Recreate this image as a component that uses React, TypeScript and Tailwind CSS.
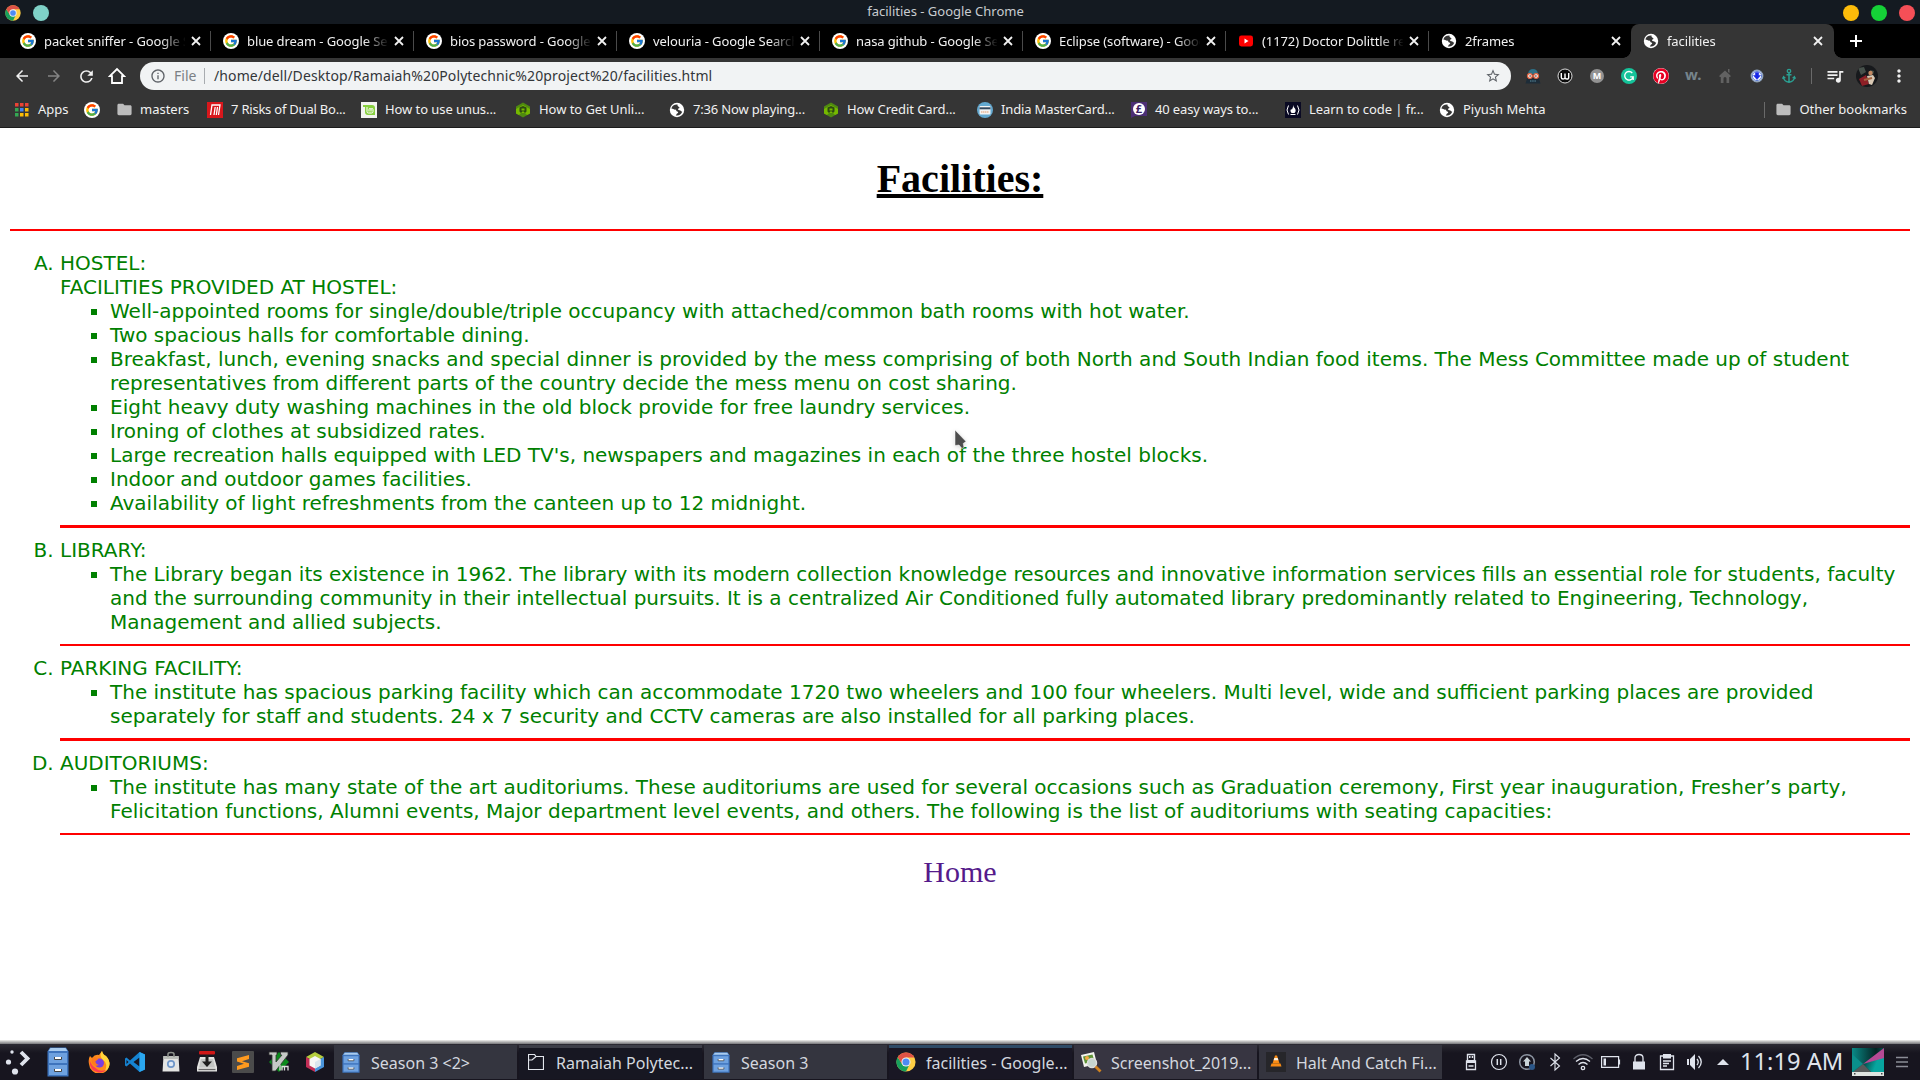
import type { ReactNode } from "react";
import { FcGoogle } from "react-icons/fc";
import { FaPinterest } from "react-icons/fa";
import {
  MdArrowBack,
  MdArrowForward,
  MdRefresh,
  MdStarBorder,
  MdInfoOutline,
  MdMoreVert,
  MdFolder,
  MdQueueMusic,
} from "react-icons/md";

function ChromeLogo({ className }: { className: string }) {
  return (
    <svg viewBox="0 0 48 48" className={className}>
      <circle cx="24" cy="24" r="23" fill="#ffce44" />
      <path d="M4 12.5 A23 23 0 0 0 24 47 L33 29 L15 29 Z" fill="#17a05d" />
      <path d="M24 13h20.2A23 23 0 0 0 4 12.5L14.5 29z" fill="#de5246" />
      <circle cx="24" cy="24" r="11" fill="#f1f1f1" />
      <circle cx="24" cy="24" r="8.5" fill="#4c8bf5" />
    </svg>
  );
}

function GoogleIcon() {
  return (
    <span className="flex size-4 shrink-0 items-center justify-center rounded-full bg-white">
      <FcGoogle className="size-[14px]" />
    </span>
  );
}

function Globe() {
  return (
    <svg viewBox="0 0 16 16" className="size-4 shrink-0">
      <circle cx="8" cy="8" r="7.2" fill="#fff" />
      <path
        d="M8.6 2.6 C5.5 2.3 3 3.9 2.4 6.6 C4 6.9 5 7.8 6.5 7.6 C7.4 8.2 7 9.3 8.4 9.6 C9.8 9.9 9.2 11.4 8 11.6 L6.8 13.4 C9.6 14 12.4 12.5 13.2 9.8 C12.2 9.8 11.9 8.2 10.4 8.2 C9.2 8.2 8.4 7.2 9.4 6.5 C10.6 6.3 11 5.2 9.6 4.8 C8.8 4.5 8.2 3.6 8.6 2.6Z"
        fill="#353535"
      />
    </svg>
  );
}

function YouTube() {
  return (
    <svg viewBox="0 0 16 16" className="size-4 shrink-0">
      <rect x="1" y="2.5" width="14" height="11" rx="2.4" fill="#f00" />
      <path d="M6.5 5.5v5l4-2.5z" fill="#fff" />
    </svg>
  );
}

function Close() {
  return (
    <svg viewBox="0 0 10 10" className="size-2.5 shrink-0">
      <path d="M1 1l8 8M9 1l-8 8" stroke="#f1f1f1" strokeWidth="1.8" />
    </svg>
  );
}

const tabs: { title: string; icon: ReactNode; look: string }[] = [
  { title: "packet sniffer - Google Search", icon: <GoogleIcon />, look: "w-[203px] pr-2.5" },
  { title: "blue dream - Google Search", icon: <GoogleIcon />, look: "w-[203px] pr-2.5" },
  { title: "bios password - Google Search", icon: <GoogleIcon />, look: "w-[203px] pr-2.5" },
  { title: "velouria - Google Search", icon: <GoogleIcon />, look: "w-[203px] pr-2.5" },
  { title: "nasa github - Google Search", icon: <GoogleIcon />, look: "w-[203px] pr-2.5" },
  { title: "Eclipse (software) - Google Search", icon: <GoogleIcon />, look: "w-[203px] pr-2.5" },
  { title: "(1172) Doctor Dolittle reads", icon: <YouTube />, look: "w-[203px] pr-2.5" },
  { title: "2frames", icon: <Globe />, look: "w-[202px] pr-2.5" },
  {
    title: "facilities",
    icon: <Globe />,
    look: "w-[203px] rounded-t-lg bg-[#353535] pr-[11px]",
  },
];

function TitleBar() {
  return (
    <div className="flex h-6 bg-[#141a21] text-[13px] text-[#c8ccd0]">
      <div className="flex w-[600px] gap-3 pt-[5px] pl-[5px]">
        <ChromeLogo className="size-4" />
        <span className="size-4 rounded-full bg-[#7fd1c7]" />
      </div>
      <div className="w-[691px] text-center leading-[23px]">facilities - Google Chrome</div>
      <div className="ml-auto flex gap-3 pt-[5px] pr-[5px]">
        <span className="size-4 rounded-full bg-[#fdbc0a]" />
        <span className="size-4 rounded-full bg-[#15d137]" />
        <span className="size-4 rounded-full bg-[#f54f57]" />
      </div>
    </div>
  );
}

function TabStrip() {
  return (
    <div className="flex h-[34px] bg-black pl-2 text-[13px] text-[#f1f1f1]">
      {tabs.map((tab, i) => (
        <div key={tab.title} className={`relative flex items-center pl-3 ${tab.look}`}>
          {tab.icon}
          <span className="ml-2 h-[18px] w-[141px] overflow-hidden leading-[18px] tracking-[-0.1px] whitespace-nowrap [mask-image:linear-gradient(to_right,black_117px,transparent_142px)]">
            {tab.title}
          </span>
          <span className="ml-auto flex">
            <Close />
          </span>
          {i < tabs.length - 2 && (
            <span className="absolute top-[7px] right-0 h-5 w-px bg-[#4a4a4a]" />
          )}
          {i === tabs.length - 1 && (
            <>
              <span className="absolute bottom-0 -left-2 size-2 bg-[radial-gradient(circle_at_0_0,black_7.5px,#353535_8px)]" />
              <span className="absolute -right-2 bottom-0 size-2 bg-[radial-gradient(circle_at_100%_0,black_7.5px,#353535_8px)]" />
            </>
          )}
        </div>
      ))}
      <svg viewBox="0 0 12 12" className="mt-[11px] ml-4 size-3">
        <path d="M6 0v12M0 6h12" stroke="#fff" strokeWidth="2" />
      </svg>
    </div>
  );
}

function Extensions() {
  return (
    <div className="flex h-full items-center gap-4">
      <svg viewBox="0 0 16 16" className="size-4">
        <path d="M3 7Q3 1 8 1t5 6l2.500 8.500H.5z" fill="#1d2c38" />
        <path d="M3 6Q3.500 1 8 1t5 5z" fill="#2f7186" />
        <circle cx="4.900" cy="8" r="2.400" fill="#fff" stroke="#e0623f" strokeWidth="1.300" />
        <circle cx="11.100" cy="8" r="2.400" fill="#fff" stroke="#e0623f" strokeWidth="1.300" />
        <circle cx="5.100" cy="8" r=".8" fill="#222" />
        <circle cx="10.900" cy="8" r=".8" fill="#222" />
        <path d="M5 13h6" stroke="#5b8fa3" strokeDasharray="1.500 .7" />
      </svg>
      <svg viewBox="0 0 16 16" className="size-4">
        <circle cx="8" cy="8" r="7" fill="#0c0c0c" stroke="#ddd" strokeWidth="1" />
        <path
          d="M4.300 5v4.500q0 1.500 1.800 1.500T8 9.500V5.500v4q0 1.500 1.900 1.500t1.800-1.500V5"
          fill="none"
          stroke="#fff"
          strokeWidth="1.400"
        />
      </svg>
      <span className="flex size-4 items-center justify-center">
        <span className="flex size-[14px] items-center justify-center rounded-full bg-[#929292] text-[9px] font-bold text-white">
          M
        </span>
      </span>
      <svg viewBox="0 0 16 16" className="size-4">
        <circle cx="8" cy="8" r="8" fill="#15c39a" />
        <path
          d="M11.300 5A4.300 4.300 0 1 0 12.200 8.800H9.200M12.200 8.800V12"
          fill="none"
          stroke="#fff"
          strokeWidth="1.300"
        />
      </svg>
      <span className="flex size-4 rounded-full bg-white">
        <FaPinterest className="size-4 text-[#e60023]" />
      </span>
      <span className="-mt-1 w-4 text-[15px] leading-4 font-bold text-[#75848c]">w.</span>
      <svg viewBox="0 0 16 16" className="size-4">
        <path d="M2.500 7.500L8 2.500l5.500 5V9h-1.300v6H9.500v-4.500q0-1.500-1.500-1.500t-1.500 1.500V15H3.800V9H2.500z" fill="#626262" />
        <path d="M11 1h1.500v4L11 4z" fill="#626262" />
      </svg>
      <svg viewBox="0 0 16 16" className="size-4">
        <circle cx="8" cy="8" r="5.800" fill="#e8edf6" stroke="#8fa3bd" strokeWidth="1.200" />
        <circle cx="8" cy="8" r="4.600" fill="#fff" stroke="#3d63c9" strokeWidth=".8" />
        <path d="M6.300 4.500h3.400v3h1.800L8 11.500 4.500 7.500h1.800z" fill="#1727e6" stroke="#1727e6" strokeWidth=".5" />
      </svg>
      <svg viewBox="0 0 16 16" className="size-4">
        <circle cx="8" cy="3" r="1.700" fill="none" stroke="#2ba093" strokeWidth="1.300" />
        <path
          d="M8 4.500V14M5.500 6.800h5M2.300 9Q3 13.500 8 14.300 13 13.500 13.700 9"
          fill="none"
          stroke="#2ba093"
          strokeWidth="1.500"
        />
        <path d="M1 11l1.300-3.500L5 10zM15 11l-1.300-3.500L11 10z" fill="#2ba093" />
      </svg>
    </div>
  );
}

function Toolbar() {
  return (
    <div className="flex h-9 items-center bg-[#353535] text-[#f1f1f1]">
      <div className="ml-[13px] flex w-[127px] items-center gap-[14px]">
        <MdArrowBack className="size-[18px]" />
        <MdArrowForward className="size-[18px] text-[#848484]" />
        <MdRefresh className="size-[19px]" />
        <svg viewBox="0 0 18 18" className="-ml-0.5 size-[18px]">
          <path
            d="M1.800 9.200L9 2l7.200 7.200H14V16H4V9.200z"
            fill="none"
            stroke="#fff"
            strokeWidth="1.800"
          />
        </svg>
      </div>
      <div className="flex h-7 w-[1371px] items-center rounded-full bg-[#f1f3f4] pr-2.5 pl-2.5 text-[14px] leading-5 text-[#333639]">
        <MdInfoOutline className="size-4 text-[#5f6368]" />
        <span className="-mt-px ml-2 w-[22px] text-[#7b8085]">File</span>
        <span className="mr-[9px] ml-2 h-4 w-px bg-[#a8acb0]" />
        <span className="-mt-px tracking-[0.1px]">
          /home/dell/Desktop/Ramaiah%20Polytechnic%20project%20/facilities.html
        </span>
        <MdStarBorder className="ml-auto size-4 text-[#5f6368]" />
      </div>
      <div className="ml-[14px]">
        <Extensions />
      </div>
      <span className="ml-[14px] h-4 w-px bg-[#6a6a6a]" />
      <MdQueueMusic className="ml-[13px] size-5" />
      <svg viewBox="0 0 22 22" className="ml-[11px] size-[22px] rounded-full">
        <rect width="22" height="22" fill="#17191c" />
        <path d="M2 3l6-1 2 5-5 3zM14 5l4 1-1 4z" fill="#46504a" />
        <path d="M3 14l7-4 3 9-7 2z" fill="#8d1f26" />
        <circle cx="14.500" cy="8" r="2.200" fill="#c48a63" />
        <path d="M11 11l6-1 2 3-3 7-3-1z" fill="#d8c8b4" />
        <path d="M8 15l8-2" stroke="#a3623e" strokeWidth="2" />
      </svg>
      <MdMoreVert className="ml-[11px] size-5" />
    </div>
  );
}

function AppsIcon() {
  const colors = [
    "#ea4335", "#ea4335", "#ea4335",
    "#34a853", "#4285f4", "#fbbc05",
    "#34a853", "#fbbc05", "#fbbc05",
  ];
  return (
    <svg viewBox="0 0 14 14" className="size-[14px]">
      {colors.map((c, i) => (
        <rect key={i} x={(i % 3) * 5} y={Math.floor(i / 3) * 5} width="3.500" height="3.500" fill={c} />
      ))}
    </svg>
  );
}

function HexIcon() {
  return (
    <svg viewBox="0 0 16 16" className="size-4">
      <path d="M8 .5l7 4v7l-7 4-7-4v-7z" fill="#4f8a10" />
      <path d="M8 3L1 7v4.500l3 1.500 2-2h4l2 2 3-1.500V7z" fill="#76b900" />
      <path d="M4.500 5.500L8 4l3.500 1.500v4L10 11 8 9l-2 2-1.500-1.500z" fill="#2c4a12" />
      <path d="M6.500 6.500h3v2h-3z" fill="#76b900" />
    </svg>
  );
}

const bookmarks: { label: string; icon: ReactNode; tracking?: string }[] = [
  {
    label: "7 Risks of Dual Bo...",
    tracking: "tracking-[-0.22px]",
    icon: (
      <svg viewBox="0 0 16 16" className="size-4">
        <rect width="16" height="16" fill="#d9171c" />
        <path
          d="M3.500 13L5 3h8l-1.500 10M7 13l1.200-8M9.300 13l1.200-8"
          fill="none"
          stroke="#fff"
          strokeWidth="1.300"
        />
      </svg>
    ),
  },
  {
    label: "How to use unus...",
    tracking: "tracking-[-0.07px]",
    icon: (
      <svg viewBox="0 0 16 16" className="size-4">
        <rect width="16" height="16" fill="#f3f3f0" />
        <path d="M2 3h9q3 0 3 3v7H7q-3 0-3-3V5H2z" fill="#87cf3e" />
        <path
          d="M6 5v4.500q0 1.500 1.500 1.500h3q1.500 0 1.500-1.500V7.500q0-1-1-1t-1 1V9.500M8 9.500v-2q0-1 1-1t1 1"
          fill="none"
          stroke="#fff"
        />
      </svg>
    ),
  },
  { label: "How to Get Unli...", icon: <HexIcon />, tracking: "tracking-[-0.05px]" },
  { label: "7:36 Now playing...", icon: <Globe />, tracking: "tracking-[-0.18px]" },
  { label: "How Credit Card...", icon: <HexIcon />, tracking: "tracking-[-0.07px]" },
  {
    label: "India MasterCard...",
    tracking: "tracking-[-0.14px]",
    icon: (
      <svg viewBox="0 0 16 16" className="size-4">
        <circle cx="8" cy="8" r="8" fill="#64a9d0" />
        <rect x="2.500" y="4" width="11" height="8.500" rx="1" fill="#f4f4f4" />
        <rect x="2.500" y="5.300" width="11" height="2" fill="#34495e" />
        <path d="M4 10h8" stroke="#e9b99a" strokeWidth="1.500" strokeDasharray="1.500 .5" />
      </svg>
    ),
  },
  {
    label: "40 easy ways to...",
    tracking: "tracking-[-0.14px]",
    icon: (
      <svg viewBox="0 0 16 16" className="size-4">
        <path d="M0 0h16v14H4l-4 2z" fill="#4c2f75" />
        <circle cx="8" cy="7" r="6" fill="#fff" />
        <text x="8" y="11" textAnchor="middle" fontSize="11" fontWeight="700" fill="#3c2163">
          £
        </text>
      </svg>
    ),
  },
  {
    label: "Learn to code | fr...",
    tracking: "tracking-[-0.05px]",
    icon: (
      <svg viewBox="0 0 16 16" className="size-4">
        <rect width="16" height="16" fill="#0a0a23" />
        <path d="M3.500 3.500Q.5 8 3.500 12.500M12.500 3.500q3 4.500 0 9" fill="none" stroke="#fff" />
        <path d="M8 3q.5 2 2 3.500 1.500 2.500-.5 4.500H6.500Q4.500 9 6 7q.8.800 1 .5Q8.500 5.500 8 3z" fill="#fff" />
        <path d="M5.500 12.500h5" stroke="#fff" />
      </svg>
    ),
  },
  { label: "Piyush Mehta", icon: <Globe /> },
];

function BookmarksBar() {
  return (
    <div className="flex h-[34px] items-center border-b border-[#1c1c1c] bg-[#353535] pb-0.5 text-[13px] text-[#f1f1f1]">
      <div className="ml-[15px] flex w-[69px] items-center gap-[9px]">
        <AppsIcon />
        Apps
      </div>
      <GoogleIcon />
      <div className="ml-4 flex w-[91px] items-center gap-[7px]">
        <MdFolder className="size-[17px] text-[#bdbdbd]" />
        masters
      </div>
      {bookmarks.map((b) => (
        <div key={b.label} className="flex w-[154px] items-center gap-2 whitespace-nowrap">
          {b.icon}
          <span className={b.tracking}>{b.label}</span>
        </div>
      ))}
      <div className="mr-[13px] ml-auto flex items-center">
        <span className="mr-2.5 h-4 w-px bg-[#6a6a6a]" />
        <MdFolder className="mr-[7px] size-[17px] text-[#bdbdbd]" />
        Other bookmarks
      </div>
    </div>
  );
}

const facilities: { title: string; subtitle?: string; items: string[] }[] = [
  {
    title: "HOSTEL:",
    subtitle: "FACILITIES PROVIDED AT HOSTEL:",
    items: [
      "Well-appointed rooms for single/double/triple occupancy with attached/common bath rooms with hot water.",
      "Two spacious halls for comfortable dining.",
      "Breakfast, lunch, evening snacks and special dinner is provided by the mess comprising of both North and South Indian food items. The Mess Committee made up of student representatives from different parts of the country decide the mess menu on cost sharing.",
      "Eight heavy duty washing machines in the old block provide for free laundry services.",
      "Ironing of clothes at subsidized rates.",
      "Large recreation halls equipped with LED TV's, newspapers and magazines in each of the three hostel blocks.",
      "Indoor and outdoor games facilities.",
      "Availability of light refreshments from the canteen up to 12 midnight.",
    ],
  },
  {
    title: "LIBRARY:",
    items: [
      "The Library began its existence in 1962. The library with its modern collection knowledge resources and innovative information services fills an essential role for students, faculty and the surrounding community in their intellectual pursuits. It is a centralized Air Conditioned fully automated library predominantly related to Engineering, Technology, Management and allied subjects.",
    ],
  },
  {
    title: "PARKING FACILITY:",
    items: [
      "The institute has spacious parking facility which can accommodate 1720 two wheelers and 100 four wheelers. Multi level, wide and sufficient parking places are provided separately for staff and students. 24 x 7 security and CCTV cameras are also installed for all parking places.",
    ],
  },
  {
    title: "AUDITORIUMS:",
    items: [
      "The institute has many state of the art auditoriums. These auditoriums are used for several occasions such as Graduation ceremony, First year inauguration, Fresher’s party, Felicitation functions, Alumni events, Major department level events, and others. The following is the list of auditoriums with seating capacities:",
    ],
  },
];

function Page() {
  return (
    <main className="h-[912px] bg-white px-2.5 pt-7 font-['Liberation_Serif',serif]">
      <h1 className="text-center text-[40px] leading-[46px] font-bold text-black underline">
        Facilities:
      </h1>
      <hr className="mt-[26.5px] h-[2.5px] border-0 bg-[#ff0000]" />
      <ol className="mt-5 list-[upper-alpha] pl-[50px] font-['DejaVu_Sans',sans-serif] text-[20px] leading-6 text-[#008000]">
        {facilities.map((f) => (
          <li key={f.title}>
            {f.title}
            {f.subtitle && <div>{f.subtitle}</div>}
            <ul className="list-[square] pl-[50px]">
              {f.items.map((item) => (
                <li key={item}>{item}</li>
              ))}
            </ul>
            <hr className="my-2.5 h-[2.5px] border-0 bg-[#ff0000]" />
          </li>
        ))}
      </ol>
      <div className="mt-5 text-center text-[30px] leading-[34px]">
        <a href="#home" className="text-[#551a8b]">
          Home
        </a>
      </div>
    </main>
  );
}

function Cursor() {
  return (
    <svg
      viewBox="0 0 14 22"
      className="absolute top-[429px] left-[954px] h-[22px] w-[14px] drop-shadow-sm"
    >
      <path
        d="M1 1v15.500l4-.5 3 3.500 2-1-.8-4L12 12.500z"
        fill="#4d4d4d"
        stroke="#fff"
        strokeWidth=".5"
      />
    </svg>
  );
}

function Cabinet({ className }: { className: string }) {
  return (
    <svg viewBox="0 0 22 30" preserveAspectRatio="none" className={className}>
      <path d="M3 .5h16l2.500 4V29.500H.5V4.500z" fill="#3e74bd" />
      <path d="M3.500 1h15l2 3h-19z" fill="#a9cbee" />
      <rect x="2" y="6" width="18" height="10" fill="#6ea1df" />
      <rect x="2" y="18" width="18" height="10" fill="#6ea1df" />
      <path d="M7.500 10v2.500h7V10M7.500 22v2.500h7V22" fill="#fff" stroke="#444" strokeWidth="1" />
    </svg>
  );
}

function Launchers() {
  return (
    <div className="flex items-center">
      <svg viewBox="0 0 26 26" className="ml-[5px] size-[26px]">
        <circle cx="7" cy="3" r="1.700" fill="#dfe3ec" />
        <circle cx="3.500" cy="13" r="2.600" fill="#dfe3ec" />
        <circle cx="10" cy="22.500" r="3.100" fill="#dfe3ec" />
        <path d="M16 3l6.500 6.500L16 16" fill="none" stroke="#dfe3ec" strokeWidth="3.800" />
      </svg>
      <Cabinet className="mr-[19px] ml-4 h-[30px] w-[22px]" />
      <div className="flex gap-[14px]">
        <svg viewBox="0 0 22 22" className="size-[22px]">
          <path d="M2 5l2 2q3-4 7-3l3-4q1 4 4 5 3 3 3.500 7A10 10 0 0 1 1 13Q0 8 2 5z" fill="#ff8a1c" />
          <path d="M14 0q1 4 4 5 4 4 3.500 9-1 5-5 6.500Q21 13 14 8q-3-4 0-8z" fill="#ffd43a" />
          <path d="M1.500 9q0 11 9 12.500 5 .5 8-3-7 3-11-1.500Q3 14 1.500 9z" fill="#ff3b4e" />
          <circle cx="11.500" cy="12" r="4.500" fill="#7a3fe0" />
          <path d="M4 7q4-2 6 1.500l-3 2q1 3 4 3.500-4 2-6.500-1Q3 10 4 7z" fill="#ff7a1c" />
        </svg>
        <svg viewBox="0 0 22 22" className="size-[22px]">
          <path
            d="M15.500 1L21 3.500v15L15.500 21 6 12.500 2.500 15.500 1 14.500v-7l1.500-1L6 9.500z"
            fill="#1583d2"
          />
          <path d="M15.500 6.500L9.500 11l6 4.500zM2.500 9v4l2-2z" fill="#171520" />
          <path d="M15.500 1L21 3.500v15L15.500 21z" fill="#2ba7f0" />
        </svg>
        <svg viewBox="0 0 22 22" className="size-[22px]">
          <path d="M3.500 5h15l1 15.500h-17z" fill="#e4e4e2" />
          <path d="M3.500 5h15l.3 3H3.200z" fill="#b9bcb8" />
          <path d="M8 6V3q0-1.500 3-1.500T14 3v3" fill="none" stroke="#8d918c" strokeWidth="1.500" />
          <circle cx="11" cy="13" r="3.200" fill="#dfe8f4" stroke="#6f96c8" strokeWidth="1.700" />
        </svg>
        <svg viewBox="0 0 22 22" className="size-[22px]">
          <path d="M4 6h14l3 10v4.500H1V16z" fill="#e2e2e0" />
          <path d="M5 8h12l2 8.500H3z" fill="#c3c5c3" />
          <path d="M11 3v9" fill="none" stroke="#1d1d1d" strokeWidth="3" />
          <path d="M6 10.500h10L11 16z" fill="#1d1d1d" />
          <path d="M2.500 18.500h17" stroke="#666" strokeWidth="1.300" />
          <rect x="3" width="16" height="3.500" rx="1" fill="#cf1616" />
        </svg>
        <svg viewBox="0 0 22 22" className="size-[22px]">
          <rect width="22" height="22" rx="1" fill="#4b4b4b" />
          <path d="M17 4v4l-7 2.200 7 2v3.600L5 19v-4l7-2.200-7-2.300V7.200z" fill="#ff9a1f" />
        </svg>
        <svg viewBox="0 0 22 22" className="size-[22px]">
          <path d="M11 1l10 10-10 10L1 11z" fill="#0a8a1a" />
          <path
            d="M1 1h8v3H8v7l6-7h-1.500V1H20v3L7.500 20H4V4H1z"
            fill="#c6c9c6"
            stroke="#333"
            strokeWidth=".8"
          />
          <path
            d="M12 13.500v6M14 19.500v-4h2.500v4M16.500 15.500H20v4"
            fill="none"
            stroke="#ddd"
            strokeWidth="1.300"
          />
        </svg>
        <svg viewBox="0 0 22 22" className="size-[22px]">
          <path d="M11 1l9 5-9 5-9-5z" fill="#b5ce3e" />
          <path d="M2 6l9 5v10l-9-5z" fill="#c22e56" />
          <path d="M20 6l-9 5v10l9-5z" fill="#4a95dc" />
          <path d="M11 5l5.500 3v6.500L11 17.500l-5.500-3V8z" fill="#f7f7f5" />
          <path d="M11 11l5.500-3v6.500L11 17.500z" fill="#dbe6ee" />
        </svg>
      </div>
    </div>
  );
}

const tasks: { label: string; icon: ReactNode; look: string }[] = [
  {
    label: "Season 3 <2>",
    icon: <Cabinet className="ml-2 h-[21px] w-[18px]" />,
    look: "bg-[#34353f]",
  },
  {
    label: "Ramaiah Polytec...",
    icon: (
      <svg viewBox="0 0 16 16" className="ml-[9px] size-4">
        <path
          d="M.5 15.500V.5h6l1.500 2h7.500v13zM.5 6h3.500L8 2.500"
          fill="none"
          stroke="#e2e5ec"
          strokeWidth="1.200"
        />
      </svg>
    ),
    look: "bg-[#171722] shadow-[inset_0_3px_0_#3d3e48]",
  },
  {
    label: "Season 3",
    icon: <Cabinet className="ml-2 h-[21px] w-[18px]" />,
    look: "bg-[#34353f]",
  },
  {
    label: "facilities - Google...",
    icon: <ChromeLogo className="ml-[7px] size-5" />,
    look: "bg-[#191724] shadow-[inset_0_3px_0_#2d4a66]",
  },
  {
    label: "Screenshot_2019...",
    icon: (
      <svg viewBox="0 0 22 22" className="ml-[6px] size-[22px]">
        <path d="M1 4l13-3 3 12-13 3z" fill="#f4f4ee" />
        <path d="M3 5.500l9.500-2 2 7-9.500 2z" fill="#5f9437" />
        <circle cx="7" cy="7" r="2" fill="#f4a742" />
        <circle cx="12" cy="12" r="4.500" fill="#c6d5ce" stroke="#dcdedc" strokeWidth="1.500" />
        <path d="M15.500 15.500l5 5" stroke="#d0821f" strokeWidth="2.800" />
      </svg>
    ),
    look: "bg-[#373541]",
  },
  {
    label: "Halt And Catch Fi...",
    icon: (
      <svg viewBox="0 0 20 20" className="ml-[7px] size-5">
        <rect width="20" height="20" fill="#26262a" />
        <path d="M9 3.500h2l2.500 8h-7z" fill="#f98b14" />
        <path d="M8.300 6h3.400l.7 2.200H7.600z" fill="#fff3df" />
        <path d="M5.500 11.500h9l1 3h-11z" fill="#f98b14" />
      </svg>
    ),
    look: "bg-[#34343e]",
  },
];

function Tray() {
  return (
    <div className="flex items-center gap-2 text-[#dfe3ec]">
      <svg viewBox="0 0 20 20" className="size-5">
        <path d="M6.500 9V2.500h7V9" fill="none" stroke="currentColor" strokeWidth="1.400" />
        <path d="M5.500 9h9v8.500h-9zM7.500 14h5" fill="none" stroke="currentColor" strokeWidth="1.300" />
        <path d="M8 4h1.500v2H8zM10.700 4h1.500v2h-1.500zM6 8h8v3H6z" fill="currentColor" />
      </svg>
      <svg viewBox="0 0 20 20" className="size-5">
        <circle cx="10" cy="10" r="7.500" fill="none" stroke="currentColor" strokeWidth="1.200" />
        <path d="M8.300 7v6M11.700 7v6" stroke="currentColor" strokeWidth="1.500" />
      </svg>
      <svg viewBox="0 0 20 20" className="size-5">
        <circle cx="10" cy="10" r="7.300" fill="none" stroke="#8b93a0" strokeWidth="1.500" />
        <path d="M10 5l4 4.500h-2V14H8V9.500H6z" fill="#c9d3d8" />
        <circle cx="15" cy="15" r="3" fill="#2b5688" />
      </svg>
      <svg viewBox="0 0 20 20" className="size-5">
        <path d="M5.500 6l9 8L10 18V2l4.500 4-9 8" fill="none" stroke="currentColor" strokeWidth="1.100" />
      </svg>
      <svg viewBox="0 0 20 20" className="size-5" fill="none" strokeWidth="1.300">
        <path d="M.5 7Q10-1.500 19.500 7" stroke="#5d5f69" />
        <path d="M3 9.500q7-6 14 0M5.500 12.500q4.500-4 9 0" stroke="currentColor" />
        <circle cx="10" cy="16" r="1.700" stroke="currentColor" />
      </svg>
      <svg viewBox="0 0 20 20" className="size-5">
        <path
          d="M.6 4.600h17v10.800H.6zM18.500 7.500v5"
          fill="none"
          stroke="currentColor"
          strokeWidth="1.200"
        />
        <path d="M2.500 6.500h2.500v7H2.500z" fill="currentColor" />
      </svg>
      <svg viewBox="0 0 20 20" className="size-5">
        <path d="M6 10V6q0-3.500 4-3.500T14 6v4" fill="none" stroke="currentColor" strokeWidth="1.300" />
        <path d="M4 9.500h12v8H4z" fill="currentColor" />
      </svg>
      <svg viewBox="0 0 20 20" className="size-5">
        <path
          d="M3.500 4h13v13.500h-13zM6 9h8M6 11.500h6M6 14h4"
          fill="none"
          stroke="currentColor"
          strokeWidth="1.300"
        />
        <path d="M6 2h8v4.500H6z" fill="currentColor" />
      </svg>
      <svg viewBox="0 0 20 20" className="size-5">
        <path d="M2 7v6h2V7zM5 7l5-5v16l-5-5z" fill="currentColor" />
        <path d="M12 7q2.500 3 0 6M13.500 4q5.500 6 0 12" fill="none" stroke="currentColor" strokeWidth="1.300" />
      </svg>
      <svg viewBox="0 0 20 20" className="size-5">
        <path d="M4 13l6-6 6 6z" fill="currentColor" />
      </svg>
    </div>
  );
}

function DesktopPager() {
  return (
    <svg viewBox="0 0 32 28" className="h-7 w-8">
      <defs>
        <linearGradient id="pagerTop" x1="0" y1="0" x2="1" y2="0">
          <stop offset="0" stopColor="#0a8a87" />
          <stop offset=".75" stopColor="#042322" />
          <stop offset="1" stopColor="#07504e" />
        </linearGradient>
        <linearGradient id="pagerRight" x1="0" y1="0" x2="1" y2=".3">
          <stop offset="0" stopColor="#043230" />
          <stop offset=".7" stopColor="#08a59f" />
        </linearGradient>
      </defs>
      <rect width="32" height="28" fill="url(#pagerTop)" />
      <path d="M0 6l11 10L0 24z" fill="#0a8f8b" />
      <path d="M11 16L32 9v16H20z" fill="url(#pagerRight)" />
      <path d="M11 16L32 0v10z" fill="#b54a94" />
      <path d="M11 16l9 9H0z" fill="#565a5a" />
      <rect y="24" width="32" height="4" fill="#dfe3e0" />
      <path d="M2 25h1.500v1.500H2zM29 25h1.500v1.500H29z" fill="#444" />
    </svg>
  );
}

function Taskbar() {
  return (
    <footer className="flex h-10 flex-col bg-[#17151f]">
      <div className="h-1 bg-gradient-to-b from-[#f0f0ee] to-[#77777a]" />
      <div className="flex h-9 items-center bg-gradient-to-b from-[#2c2b33] via-[#17151f] via-25% to-[#17151f]">
        <div className="w-[334px]">
          <Launchers />
        </div>
        <div className="flex h-[34px] gap-0.5">
          {tasks.map((t) => (
            <div key={t.label} className={`flex w-[183px] items-center ${t.look}`}>
              <span className="flex w-[37px] items-center">{t.icon}</span>
              <span className="mt-0.5 text-[16px] whitespace-nowrap text-[#d3d7df]">{t.label}</span>
            </div>
          ))}
        </div>
        <div className="ml-[19px]">
          <Tray />
        </div>
        <span className="ml-[7px] w-[112px] text-[23.7px] leading-none whitespace-nowrap text-[#dfe3ec]">
          11:19 AM
        </span>
        <DesktopPager />
        <svg viewBox="0 0 12 12" className="ml-3 size-3">
          <path d="M0 1.500h12M0 6h12M0 10.500h12" stroke="#8b8d96" strokeWidth="1.600" />
        </svg>
      </div>
    </footer>
  );
}

export default function App() {
  return (
    <div className="relative h-[1080px] w-[1920px] overflow-hidden bg-white font-['Noto_Sans',sans-serif]">
      <TitleBar />
      <TabStrip />
      <Toolbar />
      <BookmarksBar />
      <Page />
      <Taskbar />
      <Cursor />
    </div>
  );
}
